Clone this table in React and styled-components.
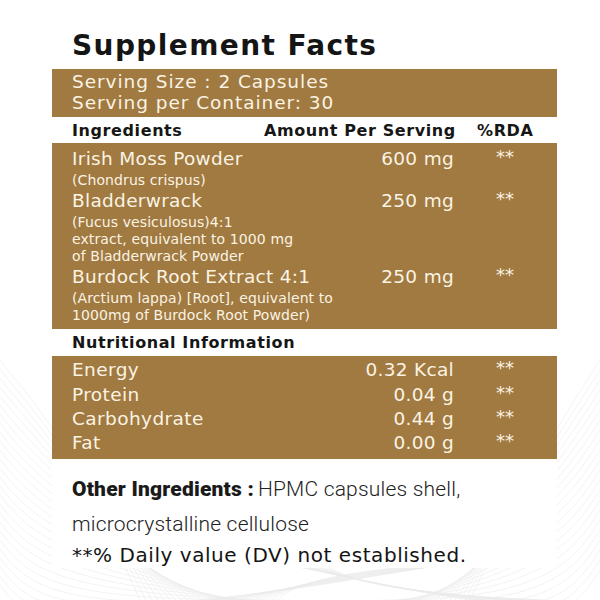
import React from 'react';
import styled, { createGlobalStyle } from 'styled-components';

const Global = createGlobalStyle`
  html, body { margin: 0; padding: 0; background: #fff; }
  #root { width: 600px; height: 600px; }
`;

const BROWN = '#a07a41';
const CREAM = '#fbf3e3';

const Page = styled.div`
  position: relative;
  width: 600px;
  height: 600px;
  overflow: hidden;
  background: #fff;
  box-sizing: border-box;
  padding: 33px 43px 0 52px;
  font-family: "DejaVu Sans", sans-serif;
`;

const Waves = styled.svg`
  position: absolute;
  left: 0;
  top: 0;
  z-index: 0;
  pointer-events: none;
`;

const Panel = styled.div`
  position: relative;
  z-index: 1;
  width: 505px;
  background: #fff;
  display: flex;
  flex-direction: column;
`;

const Title = styled.h1`
  margin: 0;
  padding: 0 0 10px 20px;
  font-size: 28px;
  line-height: 26px;
  font-weight: 700;
  letter-spacing: 1.4px;
  color: #151515;
`;

const Band = styled.div`
  background: ${BROWN};
  color: ${CREAM};
  padding: ${p => p.$pad || '0'};
  padding-left: 20px;
`;

const ServingLine = styled.div`
  font-size: 18.5px;
  line-height: 21px;
  letter-spacing: 0.95px;
`;

const Grid = styled.div`
  display: grid;
  grid-template-columns: minmax(0, 1fr) 190px 103px;
  align-items: start;
`;

const HeadRow = styled(Grid)`
  height: ${p => p.$h}px;
  align-items: center;
  padding-left: 20px;
  font-size: 16px;
  font-weight: 700;
  color: #161616;
`;

const HeadCell = styled.div`
  text-align: ${p => (p.$right ? 'right' : 'left')};
  padding-left: ${p => p.$pl || 0}px;
  letter-spacing: ${p => p.$ls ?? 0.6}px;
  white-space: nowrap;
  grid-column: ${p => (p.$span ? '1 / -1' : 'auto')};
`;

const Item = styled(Grid)`
  padding-bottom: 1px;
`;

const NameCol = styled.div`
  display: flex;
  flex-direction: column;
`;

const Name = styled.div`
  font-size: 18.5px;
  line-height: 22px;
  white-space: nowrap;
  letter-spacing: 0.3px;
`;

const Sub = styled.div`
  font-size: 14px;
  line-height: 17px;
  white-space: nowrap;
  letter-spacing: 0.1px;
`;

const SubWrap = styled.div`
  margin-top: 2px;
`;

const Amount = styled.div`
  font-size: 18.5px;
  line-height: ${p => p.$lh || 22}px;
  text-align: right;
  white-space: nowrap;
  letter-spacing: 0.3px;
`;

const Stars = styled.div`
  font-size: 18px;
  line-height: ${p => p.$lh || 22}px;
  padding-left: 42px;
  transform: translateY(-2px);
`;

const NutRow = styled(Grid)`
  height: 24.4px;
  align-items: center;
`;

const NutName = styled.div`
  font-size: 18.5px;
  line-height: 24px;
  letter-spacing: 0.4px;
`;

const Footer = styled.div`
  padding: 13px 0 0 20px;
  color: #1e1e1e;
`;

const Other = styled.p`
  margin: 0;
  font-family: Roboto, "Liberation Sans", sans-serif;
  font-size: 21px;
  line-height: 35px;
  font-weight: 300;
  color: #222;
  letter-spacing: 0.2px;
`;

const OtherLabel = styled.span`
  font-weight: 900;
  color: #1a1a1a;
  margin-right: 4px;
`;

const Daily = styled.p`
  margin: 0;
  font-size: 20px;
  line-height: 26px;
  letter-spacing: 0.55px;
  color: #141414;
`;

const ingredients = [
  { name: 'Irish Moss Powder', amount: '600 mg', sub: ['(Chondrus crispus)'] },
  {
    name: 'Bladderwrack',
    amount: '250 mg',
    sub: ['(Fucus vesiculosus)4:1', 'extract, equivalent to 1000 mg', 'of Bladderwrack Powder'],
  },
  {
    name: 'Burdock Root Extract 4:1',
    amount: '250 mg',
    sub: ['(Arctium lappa) [Root], equivalent to', '1000mg of Burdock Root Powder)'],
  },
];

const nutrition = [
  ['Energy', '0.32 Kcal'],
  ['Protein', '0.04 g'],
  ['Carbohydrate', '0.44 g'],
  ['Fat', '0.00 g'],
];

function WaveLines() {
  const paths = [];
  for (let i = 0; i < 26; i++) {
    const y0 = 360 + i * 9;
    paths.push(`M0 ${y0} C 30 ${y0 + 40}, 60 ${y0 + 60}, ${140 + i * 6} 600`);
  }
  for (let i = 0; i < 22; i++) {
    const y0 = 360 + i * 10;
    paths.push(`M600 ${y0} C 575 ${y0 + 40}, 545 ${y0 + 80}, ${470 - i * 5} 600`);
  }
  for (let i = 0; i < 14; i++) {
    paths.push(`M${200 + i * 6} 600 C 300 ${590 - i}, 380 ${575 - i * 0.8}, ${470 + i * 4} 560`);
    paths.push(`M${260 + i * 5} 560 C 330 ${572 + i * 0.5}, 400 ${590 + i * 0.4}, ${470 + i * 6} 600`);
  }
  return (
    <Waves width="600" height="600" viewBox="0 0 600 600">
      {paths.map((d, i) => (
        <path key={i} d={d} fill="none" stroke="#ebebeb" strokeWidth="0.6" />
      ))}
    </Waves>
  );
}

export default function App() {
  return (
    <Page>
      <Global />
      <WaveLines />
      <Panel>
        <Title>Supplement Facts</Title>
        <Band $pad="2px 0 4px 0">
          <ServingLine>Serving Size : 2 Capsules</ServingLine>
          <ServingLine>Serving per Container: 30</ServingLine>
        </Band>
        <HeadRow $h={26}>
          <HeadCell>Ingredients</HeadCell>
          <HeadCell $right>Amount Per Serving</HeadCell>
          <HeadCell $pl={23}>%RDA</HeadCell>
        </HeadRow>
        <Band $pad="5px 0 4px 0">
          {ingredients.map(it => (
            <Item key={it.name}>
              <NameCol>
                <Name>{it.name}</Name>
                <SubWrap>
                  {it.sub.map(s => (
                    <Sub key={s}>{s}</Sub>
                  ))}
                </SubWrap>
              </NameCol>
              <Amount>{it.amount}</Amount>
              <Stars>**</Stars>
            </Item>
          ))}
        </Band>
        <HeadRow $h={27}>
          <HeadCell $span>Nutritional Information</HeadCell>
        </HeadRow>
        <Band $pad="2px 0 3px 0">
          {nutrition.map(([n, v]) => (
            <NutRow key={n}>
              <NutName>{n}</NutName>
              <Amount $lh={24}>{v}</Amount>
              <Stars $lh={24}>**</Stars>
            </NutRow>
          ))}
        </Band>
        <Footer>
          <Other>
            <OtherLabel>Other Ingredients :</OtherLabel>HPMC capsules shell,
            <br />
            microcrystalline cellulose
          </Other>
          <Daily>**% Daily value (DV) not established.</Daily>
        </Footer>
      </Panel>
    </Page>
  );
}
